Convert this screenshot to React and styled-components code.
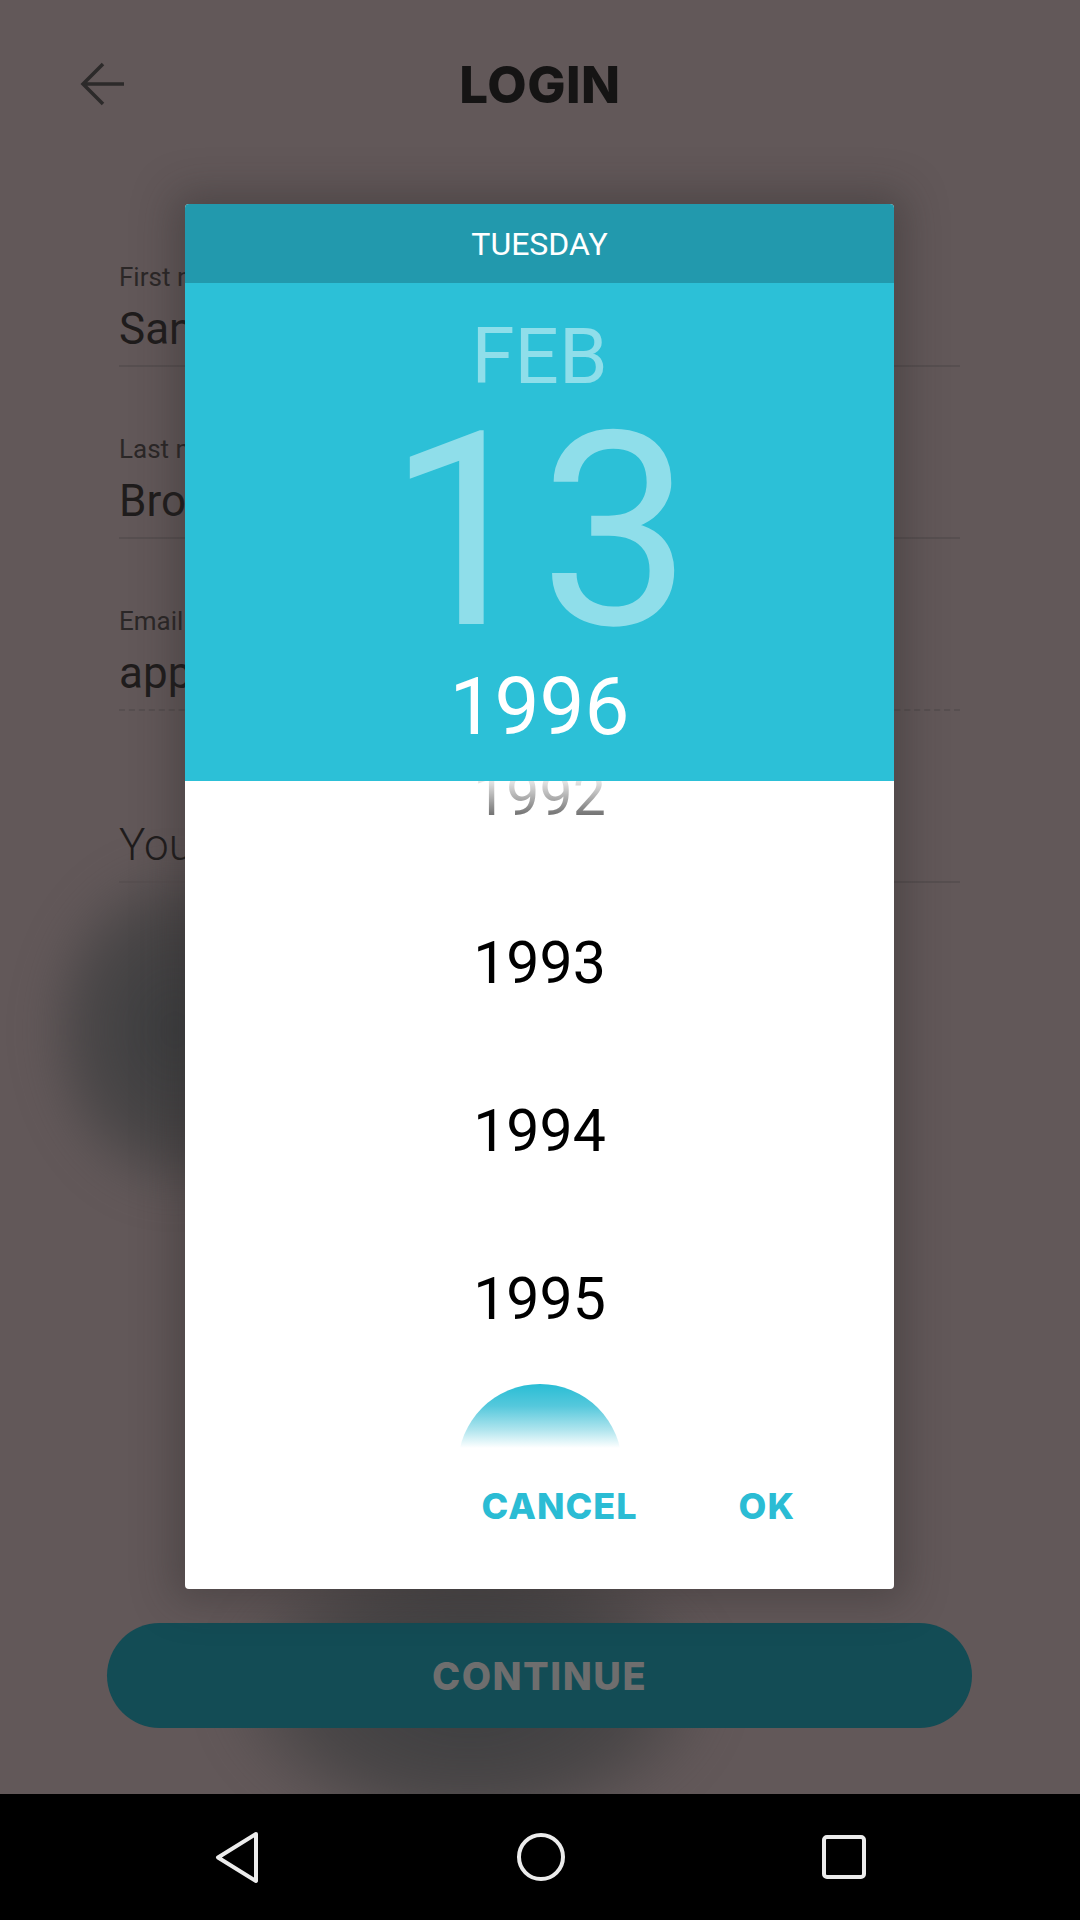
import React from 'react';
import styled, { createGlobalStyle } from 'styled-components';

const GlobalStyle = createGlobalStyle`
  html, body {
    margin: 0;
    padding: 0;
    background: #625859;
  }
  * {
    box-sizing: border-box;
  }
`;

const Screen = styled.div`
  position: relative;
  width: 1080px;
  height: 1920px;
  overflow: hidden;
  display: flex;
  flex-direction: column;
  background: #625859;
  font-family: Roboto, 'Noto Sans', sans-serif;
`;

const Shade = styled.div`
  position: absolute;
  left: ${({ x }) => x}px;
  top: ${({ y }) => y}px;
  width: ${({ w }) => w}px;
  height: ${({ h }) => h}px;
  border-radius: 50%;
  background: radial-gradient(ellipse at center, rgba(58, 60, 62, 0.95) 0%, rgba(62, 62, 63, 0.7) 45%, rgba(98, 88, 89, 0) 72%);
  filter: blur(18px);
  z-index: 0;
`;

const Page = styled.div`
  position: relative;
  z-index: 1;
  flex: 1;
  display: flex;
  flex-direction: column;
`;

const TopBar = styled.header`
  height: 168px;
  display: grid;
  grid-template-columns: 1fr auto 1fr;
  align-items: center;
`;

const BackButton = styled.div`
  padding-left: 79px;
  display: flex;
  align-items: center;
  svg {
    display: block;
  }
`;

const Title = styled.h1`
  margin: 0;
  font-family: Inter, 'Liberation Sans', sans-serif;
  font-weight: 800;
  font-size: 51px;
  line-height: 1;
  letter-spacing: 0.5px;
  color: #151414;
`;

const Form = styled.div`
  padding: 94px 120px 0 119px;
  display: flex;
  flex-direction: column;
  gap: 67px;
`;

const Field = styled.div`
  display: flex;
  flex-direction: column;
`;

const Label = styled.div`
  height: 30px;
  font-size: 26px;
  line-height: 30px;
  color: #2b2727;
`;

const Value = styled.div`
  margin-top: 11px;
  height: 52px;
  font-size: 44px;
  line-height: 52px;
  font-weight: ${({ placeholder }) => (placeholder ? 300 : 400)};
  color: #1f1c1c;
  white-space: nowrap;
`;

const Underline = styled.div`
  margin-top: 10px;
  height: 0;
  border-top: 2px ${({ dashed }) => (dashed ? 'dashed' : 'solid')} #574f50;
`;

const Spacer = styled.div`
  flex: 1;
`;

const ContinueWrap = styled.div`
  padding: 0 108px 66px 107px;
`;

const ContinueButton = styled.div`
  height: 105px;
  border-radius: 53px;
  background: #134c55;
  display: flex;
  align-items: center;
  justify-content: center;
  font-family: Inter, 'Liberation Sans', sans-serif;
  font-weight: 800;
  font-size: 38px;
  letter-spacing: 1.5px;
  color: #6e6e6e;
`;

const NavBar = styled.nav`
  position: relative;
  z-index: 1;
  height: 126px;
  background: #000;
  display: flex;
  align-items: center;
  justify-content: space-between;
  padding: 0 212px 0 213px;
  svg {
    display: block;
  }
`;

const Dialog = styled.div`
  position: absolute;
  z-index: 2;
  left: 185px;
  top: 204px;
  width: 709px;
  height: 1385px;
  border-radius: 4px;
  overflow: hidden;
  background: #fff;
  display: flex;
  flex-direction: column;
  box-shadow: 0 0 40px 12px rgba(40, 36, 37, 0.35);
`;

const DayHeader = styled.div`
  height: 79px;
  background: #2299ad;
  display: flex;
  align-items: center;
  justify-content: center;
  font-size: 32px;
  color: #fff;
`;

const DateHero = styled.div`
  height: 498px;
  background: #2cc0d7;
  padding-top: 35px;
  display: flex;
  flex-direction: column;
  align-items: center;
`;

const HeroText = styled.div`
  font-size: ${({ size }) => size}px;
  line-height: 1;
  color: ${({ active }) => (active ? '#ffffff' : 'rgba(255, 255, 255, 0.47)')};
`;

const YearList = styled.div`
  position: relative;
  height: 669px;
  overflow: hidden;
  background: #fff;
`;

const YearTrack = styled.div`
  margin-top: -71px;
  display: flex;
  flex-direction: column;
`;

const YearItem = styled.div`
  position: relative;
  height: 168px;
  display: flex;
  align-items: center;
  justify-content: center;
  font-size: 59px;
  line-height: 1;
  color: #000;
`;

const SelectedYear = styled.div`
  width: 164px;
  height: 164px;
  border-radius: 50%;
  background: linear-gradient(180deg, #29bdd5 0px, #55c8dc 22px, #b0e5ee 46px, #ffffff 64px);
`;

const TopFade = styled.div`
  position: absolute;
  left: 0;
  right: 0;
  top: 0;
  height: 64px;
  background: linear-gradient(180deg, rgba(255, 255, 255, 0.9) 0px, rgba(255, 255, 255, 0.45) 34px, rgba(255, 255, 255, 0) 64px);
`;

const Actions = styled.div`
  height: 139px;
  padding: 0 99px 27px 0;
  display: flex;
  align-items: center;
  justify-content: flex-end;
  gap: 101px;
`;

const ActionButton = styled.div`
  font-family: Inter, 'Liberation Sans', sans-serif;
  font-weight: 800;
  font-size: 36px;
  letter-spacing: 1px;
  color: #2bbcd4;
`;

const fields = [
  { label: 'First name', value: 'Sandra' },
  { label: 'Last name', value: 'Brown' },
  { label: 'Email address', value: 'appleseed@gmail.com', dashed: true },
  { label: '', value: 'Your birthday', placeholder: true },
];

const years = ['1992', '1993', '1994', '1995'];

export default function App() {
  return (
    <>
      <GlobalStyle />
      <Screen>
        <Shade x={40} y={860} w={270} h={340} />
        <Shade x={220} y={1540} w={500} h={300} />

        <Page>
          <TopBar>
            <BackButton>
              <svg width="48" height="48" viewBox="0 0 48 48" fill="none">
                <path d="M45 24H5M24 4L4 24L24 44" stroke="#2c2a2a" strokeWidth="3.5" />
              </svg>
            </BackButton>
            <Title>LOGIN</Title>
            <div />
          </TopBar>

          <Form>
            {fields.map((f) => (
              <Field key={f.value}>
                <Label>{f.label}</Label>
                <Value placeholder={f.placeholder ? 1 : 0}>{f.value}</Value>
                <Underline dashed={f.dashed ? 1 : 0} />
              </Field>
            ))}
          </Form>

          <Spacer />

          <ContinueWrap>
            <ContinueButton>CONTINUE</ContinueButton>
          </ContinueWrap>
        </Page>

        <NavBar>
          <svg width="48" height="56" viewBox="0 0 48 56" fill="none">
            <path d="M43 5L5 28.5L43 52Z" stroke="#ececec" strokeWidth="4" strokeLinejoin="round" />
          </svg>
          <svg width="52" height="52" viewBox="0 0 52 52" fill="none">
            <circle cx="26" cy="26" r="22" stroke="#ececec" strokeWidth="4" />
          </svg>
          <svg width="48" height="48" viewBox="0 0 48 48" fill="none">
            <rect x="4" y="4" width="40" height="40" rx="3" stroke="#ececec" strokeWidth="4" />
          </svg>
        </NavBar>

        <Dialog>
          <DayHeader>TUESDAY</DayHeader>
          <DateHero>
            <HeroText size={78}>FEB</HeroText>
            <HeroText size={271}>13</HeroText>
            <HeroText size={80} active>
              1996
            </HeroText>
          </DateHero>
          <YearList>
            <YearTrack>
              {years.map((y) => (
                <YearItem key={y}>{y}</YearItem>
              ))}
              <YearItem>
                <SelectedYear />
              </YearItem>
            </YearTrack>
            <TopFade />
          </YearList>
          <Actions>
            <ActionButton>CANCEL</ActionButton>
            <ActionButton>OK</ActionButton>
          </Actions>
        </Dialog>
      </Screen>
    </>
  );
}
